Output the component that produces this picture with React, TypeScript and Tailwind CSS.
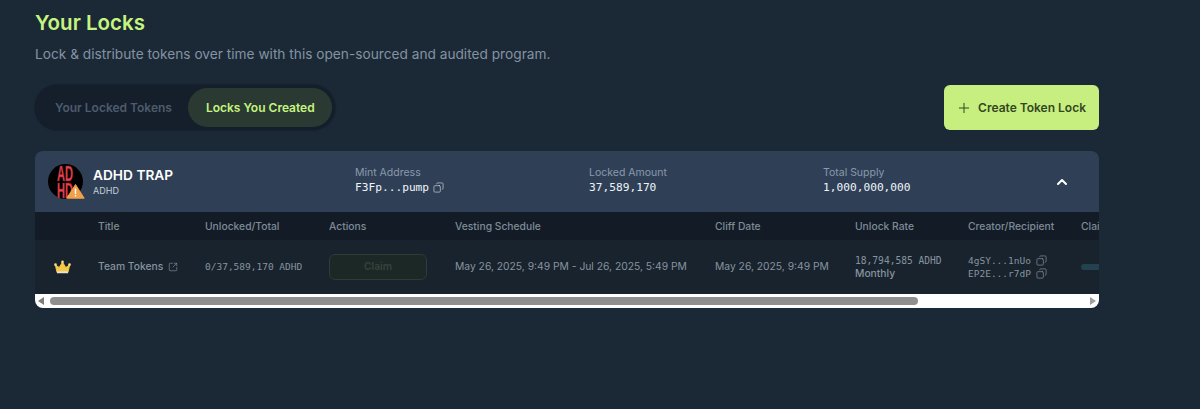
import { ChevronUp, Copy, Plus, SquareArrowOutUpRight } from 'lucide-react';

const mono = "font-['DejaVu_Sans_Mono','Liberation_Mono',monospace]";

function TokenLogo() {
  return (
    <svg viewBox="0 0 37 35" className="h-[35px] w-[37px] shrink-0">
      <circle cx="17.5" cy="17.5" r="17.5" fill="#000" />
      <g fill="#e8434f" stroke="#8f1f2a" strokeWidth="0.3" fontFamily="Liberation Sans, sans-serif" fontWeight="700" fontSize="12" textAnchor="middle">
        <text transform="translate(17 16.5) scale(0.92 1.85)">AD</text>
        <text transform="translate(17 33.5) scale(0.92 1.85)">HD</text>
      </g>
      <path d="M27.5 20.5 L36.2 34.2 L18.8 34.2 Z" fill="#f0a04a" stroke="#f0a04a" strokeLinejoin="round" />
      <rect x="26.8" y="24.5" width="1.4" height="5.5" fill="#fff" />
      <rect x="26.8" y="31" width="1.4" height="1.5" fill="#fff" />
    </svg>
  );
}

function Crown() {
  return (
    <svg viewBox="0 0 18 14" className="h-[14px] w-[17px]">
      <path d="M3 12 L1.5 5 L5.5 7.5 L9 2 L12.5 7.5 L16.5 5 L15 12 Z" fill="#f6c945" stroke="#f6c945" strokeLinejoin="round" />
      <circle cx="1.6" cy="4.5" r="1.4" fill="#f8e08a" />
      <circle cx="9" cy="1.6" r="1.4" fill="#f8e08a" />
      <circle cx="16.4" cy="4.5" r="1.4" fill="#f8e08a" />
      <rect x="3" y="11.6" width="12" height="2" rx="0.6" fill="#e8e2c8" />
    </svg>
  );
}

function Stat({ label, value, icon, className }: { label: string; value: string; icon?: boolean; className: string }) {
  return (
    <div className={`${className} pb-[2px]`}>
      <div className="text-[10.5px] leading-[14px] text-[#8a99ad]">{label}</div>
      <div className={`flex items-center gap-[4px] text-[11.2px] leading-[16px] text-[#eef4fa] ${mono}`}>
        {value}
        {icon && <Copy className="h-[11px] w-[11px] scale-x-[-1] text-[#c6d0dc]" strokeWidth={1.5} />}
      </div>
    </div>
  );
}

function Address({ value }: { value: string }) {
  return (
    <div className={`flex items-center gap-[5px] text-[9.5px] leading-[13.5px] text-[#87939f] ${mono}`}>
      {value}
      <Copy className="h-[11px] w-[11px] scale-x-[-1] text-[#87939f]" strokeWidth={1.5} />
    </div>
  );
}

const COLS = 'grid grid-cols-[63px_107px_124px_126px_260px_140px_113px_113px_60px]';

export default function App() {
  return (
    <div className="h-[409px] overflow-hidden bg-[#1b2937] pl-[35px] font-['Inter',sans-serif]">
      <div className="w-[1064px]">
        <h1 className="pt-[9px] text-[20.5px] leading-[27px] font-semibold text-[#c6f57f]">Your Locks</h1>
        <p className="mt-[8px] text-[13.7px] leading-[20px] text-[#8492a2]">
          Lock &amp; distribute tokens over time with this open-sourced and audited program.
        </p>

        <div className="mt-[21px] flex items-center justify-between">
          <div className="flex h-[45px] items-center rounded-full bg-[#141f2b] p-[3px] shadow-[0_0_2px_#0d151e]">
            <button className="pr-[16px] pl-[17px] text-[12px] font-semibold text-[#4e5b6b]">Your Locked Tokens</button>
            <button className="h-[39px] rounded-full bg-[#2a3a33] pr-[17px] pl-[18px] text-[12px] font-semibold text-[#c6f57f]">
              Locks You Created
            </button>
          </div>
          <button className="flex h-[45px] items-center gap-[6px] rounded-[6px] bg-[#c6ef80] pr-[13px] pl-[12px] text-[12px] font-semibold text-[#34471f]">
            <Plus className="h-[16px] w-[16px] text-[#34471f]" strokeWidth={1.5} />
            Create Token Lock
          </button>
        </div>

        <div className="mt-[21px] overflow-hidden rounded-[8px]">
          <div className="relative flex h-[61px] items-center bg-[#2f4056]">
            <div className="ml-[13px] flex w-[307px] items-center gap-[8px]">
              <TokenLogo />
              <div>
                <div className="text-[13.7px] leading-[18px] font-semibold text-white">ADHD TRAP</div>
                <div className="mt-[1px] text-[9px] leading-[12px] text-[#c5ced9]">ADHD</div>
              </div>
            </div>
            <Stat label="Mint Address" value="F3Fp...pump" icon className="w-[234px]" />
            <Stat label="Locked Amount" value="37,589,170" className="w-[234px]" />
            <Stat label="Total Supply" value="1,000,000,000" className="w-[231px]" />
            <ChevronUp className="h-[16px] w-[16px] text-white" strokeWidth={3} />
          </div>

          <div className="overflow-hidden">
            <div className={`${COLS} h-[28px] w-[1106px] items-center bg-[#131c26] pt-[1px] text-[10.3px] font-medium text-[#7e8b97]`}>
              <span />
              <span>Title</span>
              <span>Unlocked/Total</span>
              <span>Actions</span>
              <span>Vesting Schedule</span>
              <span>Cliff Date</span>
              <span>Unlock Rate</span>
              <span>Creator/Recipient</span>
              <span>Claimed</span>
            </div>
            <div className={`${COLS} h-[54px] w-[1106px] items-center bg-[#18232e] text-[10.3px] text-[#87939f]`}>
              <span className="pl-[19px]">
                <Crown />
              </span>
              <span className="flex items-center gap-[5px] font-medium">
                Team Tokens
                <SquareArrowOutUpRight className="h-[10px] w-[10px]" strokeWidth={1.5} />
              </span>
              <span className={`text-[9.5px] ${mono}`}>0/37,589,170 ADHD</span>
              <span>
                <button className="h-[26px] w-[98px] rounded-[6px] border border-[#2e3b38] bg-[#1c2826] text-[10.3px] font-semibold text-[#33443a]">
                  Claim
                </button>
              </span>
              <span>May 26, 2025, 9:49 PM - Jul 26, 2025, 5:49 PM</span>
              <span>May 26, 2025, 9:49 PM</span>
              <div className="leading-[13.5px]">
                <div className={`text-[9.6px] ${mono}`}>18,794,585 ADHD</div>
                <div className="font-medium">Monthly</div>
              </div>
              <div>
                <Address value="4gSY...1nUo" />
                <Address value="EP2E...r7dP" />
              </div>
              <div className="h-[6px] w-[40px] rounded-full bg-[#24414f]" />
            </div>
          </div>

          <div className="flex h-[14px] items-center bg-white">
            <span className="ml-[3px] h-0 w-0 border-y-[4px] border-r-[6px] border-y-transparent border-r-[#7d7d7d]" />
            <div className="ml-[6px] h-[8px] w-[868px] rounded-full bg-[#8f8f8f]" />
            <span className="mr-[3px] ml-auto h-0 w-0 border-y-[4px] border-l-[6px] border-y-transparent border-l-[#a0a0a0]" />
          </div>
        </div>
      </div>
    </div>
  );
}
